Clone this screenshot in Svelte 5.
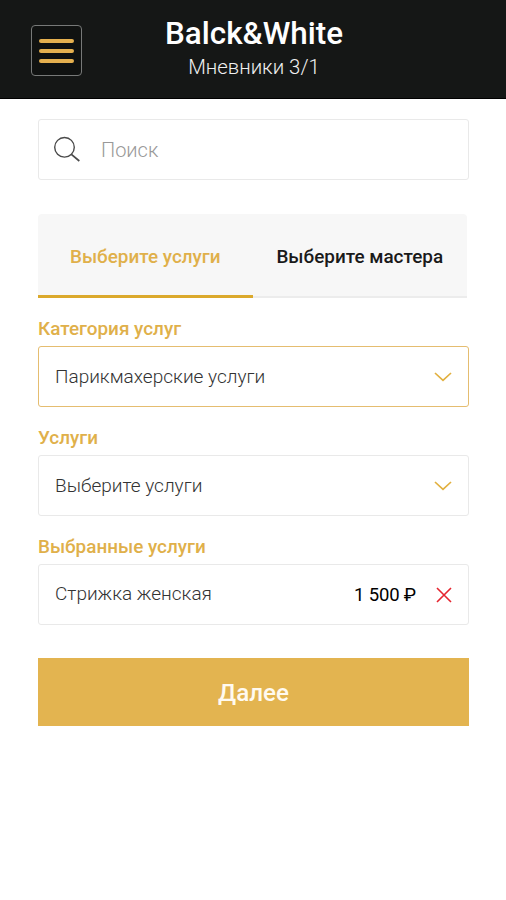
<script lang="ts">
  type Service = { name: string; price: string };

  let search = $state('');
  let activeTab = $state(0);
  let selected = $state<Service[]>([{ name: 'Стрижка женская', price: '1 500 ₽' }]);

  const tabs = ['Выберите услуги', 'Выберите мастера'];
  const fields = [
    { label: 'Категория услуг', value: 'Парикмахерские услуги', active: true },
    { label: 'Услуги', value: 'Выберите услуги', active: false },
  ];

  function removeService(service: Service) {
    selected = selected.filter((s) => s !== service);
  }
</script>

<div class="screen">
  <header>
    <button class="menu-btn" aria-label="Меню">
      <span></span>
      <span></span>
      <span></span>
    </button>
    <div class="heading">
      <h1>Balck&amp;White</h1>
      <p>Мневники 3/1</p>
    </div>
  </header>

  <main>
    <label class="box search">
      <svg width="28" height="28" viewBox="0 0 28 28" fill="none" stroke="#4a4a4a" stroke-width="1.4">
        <circle cx="11.5" cy="11.3" r="9.8" />
        <path d="M18.4 18.3 L26.3 25" stroke-width="1.7" />
      </svg>
      <input type="text" placeholder="Поиск" bind:value={search} />
    </label>

    <div class="tabs">
      {#each tabs as tab, i}
        <button class="tab" class:active={activeTab === i} onclick={() => (activeTab = i)}>{tab}</button>
      {/each}
    </div>

    {#each fields as field}
      <section>
        <h2>{field.label}</h2>
        <button class="box select" class:active={field.active}>
          <span class="value">{field.value}</span>
          <svg width="18" height="10" viewBox="0 0 18 10" fill="none" stroke="#e2b03f" stroke-width="1.7">
            <path d="M1 1 L9 8.4 L17 1" />
          </svg>
        </button>
      </section>
    {/each}

    <section>
      <h2>Выбранные услуги</h2>
      {#each selected as service}
        <div class="box service">
          <span class="value">{service.name}</span>
          <span class="price">{service.price}</span>
          <button class="remove" aria-label="Удалить" onclick={() => removeService(service)}>
            <svg width="16" height="16" viewBox="0 0 16 16" fill="none" stroke="#e5252f" stroke-width="1.6">
              <path d="M1 1 L15 15 M15 1 L1 15" />
            </svg>
          </button>
        </div>
      {/each}
    </section>

    <button class="next">Далее</button>
  </main>
</div>

<style>
  :global(body) {
    background: #fff;
  }

  .screen {
    min-height: 900px;
    font-family: Roboto, 'Noto Sans', sans-serif;
    color: #333;
  }

  button,
  input {
    margin: 0;
    padding: 0;
    border: none;
    background: none;
    font: inherit;
    color: inherit;
  }

  h1, h2, p {
    margin: 0;
  }

  header {
    display: grid;
    grid-template-columns: 51px 1fr 51px;
    height: 99px;
    padding: 0 29px 0 31px;
    box-sizing: border-box;
    background: #151716;
    border-bottom: 1px solid #000;
    color: #fff;
  }

  .menu-btn {
    display: flex;
    flex-direction: column;
    align-items: center;
    justify-content: center;
    gap: 6px;
    width: 51px;
    height: 51px;
    margin-top: 25px;
    box-sizing: border-box;
    border: 1.5px solid #777978;
    border-radius: 4px;
    background: #101211;
  }

  .menu-btn span {
    width: 35px;
    height: 4px;
    border-radius: 2px;
    background: #e5b04f;
  }

  .heading {
    padding-top: 15px;
    text-align: center;
  }

  h1 {
    font-size: 31.4px;
    font-weight: 500;
    line-height: 38px;
  }

  header p {
    margin-top: 1px;
    font-size: 20.4px;
    font-weight: 300;
    line-height: 26px;
    color: #f0f0f0;
  }

  main {
    display: flex;
    flex-direction: column;
    padding: 20px 37px 0 38px;
  }

  .box {
    display: flex;
    align-items: center;
    width: 100%;
    height: 61px;
    box-sizing: border-box;
    border: 1.5px solid #e9e9e9;
    border-radius: 3px;
    background: #fff;
    font-size: 19px;
    font-weight: 300;
    text-align: left;
  }

  .search {
    gap: 20px;
    padding: 0 15px 0 14px;
  }

  .search input {
    flex: 1;
    min-width: 0;
    outline: none;
    font-size: 20px;
  }

  .search input::placeholder {
    color: #999;
    opacity: 1;
  }

  .tabs {
    display: grid;
    grid-template-columns: 1fr 1fr;
    height: 84px;
    margin: 34px 2px 18px 0;
    border-radius: 4px 4px 0 0;
    background: #f7f7f7;
  }

  .tab {
    padding-top: 2px;
    border-bottom: 2px solid #ececec;
    font-size: 18.9px;
    font-weight: 500;
    color: #1a1a1a;
  }

  .tab.active {
    padding-top: 3px;
    border-bottom: 3px solid #dba92c;
    color: #e0b04a;
  }

  section {
    margin-bottom: 18px;
  }

  h2 {
    height: 30px;
    font-size: 18.9px;
    font-weight: 500;
    line-height: 26px;
    color: #e0b04a;
  }

  .select,
  .service {
    padding: 0 16px;
  }

  .select.active {
    border-color: #e5bd70;
  }

  .value {
    flex: 1;
  }

  .service .value {
    padding-bottom: 3px;
  }

  .price {
    margin-right: 20px;
    font-size: 18.5px;
    font-weight: 400;
    letter-spacing: -0.15px;
    color: #000;
  }

  .remove {
    display: flex;
  }

  .next {
    height: 68px;
    margin-top: 15px;
    padding-top: 2px;
    background: #e3b450;
    font-size: 24.2px;
    font-weight: 500;
    color: #fffaf0;
  }
</style>
